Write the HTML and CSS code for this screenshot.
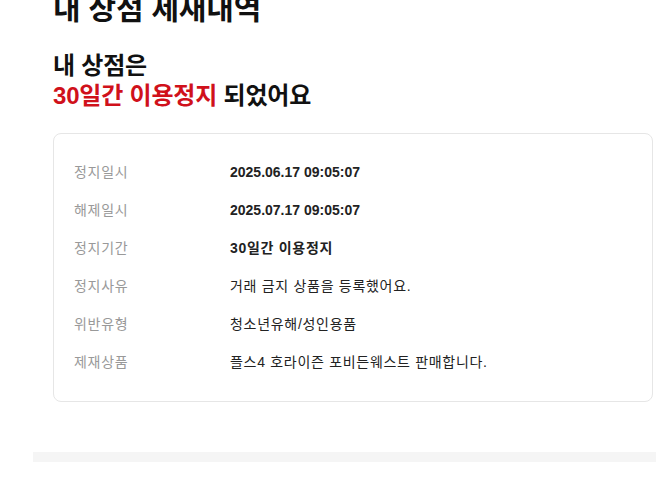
FILE: index.html
```html
<!DOCTYPE html>
<html lang="ko">
<head>
<meta charset="utf-8">
<link rel="stylesheet" href="styles.css">
</head>
<body>
<div class="page">
  <section class="content">
    <h1 class="title">내 상점 제재내역</h1>
    <h2 class="headline">내 상점은<br><span class="red">30일간 이용정지</span> 되었어요</h2>
    <div class="card">
      <div class="row"><span class="label">정지일시</span><span class="value bold num">2025.06.17 09:05:07</span></div>
      <div class="row"><span class="label">해제일시</span><span class="value bold num">2025.07.17 09:05:07</span></div>
      <div class="row"><span class="label">정지기간</span><span class="value bold">30일간 이용정지</span></div>
      <div class="row"><span class="label">정지사유</span><span class="value">거래 금지 상품을 등록했어요.</span></div>
      <div class="row"><span class="label">위반유형</span><span class="value">청소년유해/성인용품</span></div>
      <div class="row"><span class="label">제재상품</span><span class="value">플스4 호라이즌 포비든웨스트 판매합니다.</span></div>
    </div>
  </section>
  <div class="divider"></div>
</div>
</body>
</html>
```

FILE: styles.css
```css
html, body {
  margin: 0;
  padding: 0;
  background: #ffffff;
  overflow: hidden;
}
body {
  font-family: "Liberation Sans", "Noto Sans CJK KR", sans-serif;
  color: #111111;
}
.page {
  padding-left: 33px;
  width: 640px;
}
.content {
  padding-left: 20px;
}
.title {
  margin: -11px 0 0 0;
  font-size: 30px;
  line-height: 40px;
  font-weight: 700;
  letter-spacing: -0.2px;
}
.headline {
  margin: 22px 0 0 0;
  font-size: 24px;
  line-height: 30px;
  font-weight: 700;
  letter-spacing: -0.2px;
}
.red {
  color: #d0111b;
}
.card {
  margin-top: 22px;
  width: 600px;
  border: 1px solid #e6e6e6;
  border-radius: 8px;
  padding: 28px 20px 29px 20px;
  box-sizing: border-box;
  display: flex;
  flex-direction: column;
  gap: 18px;
}
.row {
  display: flex;
  align-items: center;
  height: 20px;
  font-size: 14px;
  line-height: 20px;
  letter-spacing: 0.7px;
}
.label {
  width: 156px;
  flex-shrink: 0;
  color: #999999;
}
.value {
  color: #222222;
}
.bold {
  font-weight: 700;
}
.num {
  letter-spacing: 0;
}
.divider {
  margin-top: 50px;
  height: 10px;
  background: #f5f5f5;
}
```
